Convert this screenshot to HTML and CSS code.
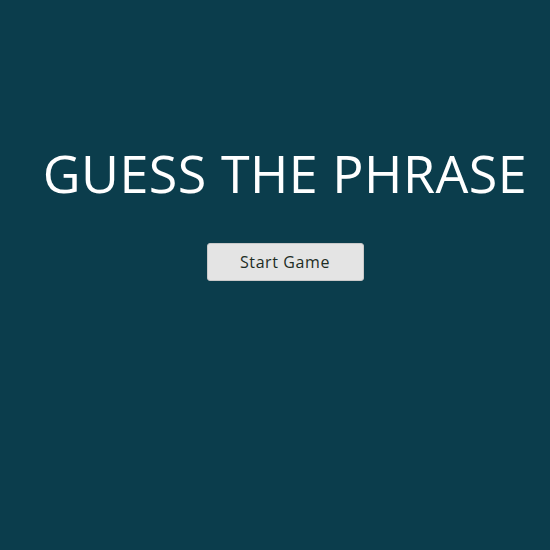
FILE: index.html
```html
<!DOCTYPE html>
<html>
<head>
<meta charset="utf-8">
<link rel="stylesheet" href="styles.css">
</head>
<body>
<div class="overlay">
  <h1 class="title">GUESS THE PHRASE</h1>
  <button class="btn-start">Start Game</button>
</div>
</body>
</html>
```
FILE: styles.css
```css
html, body {
  margin: 0;
  padding: 0;
  height: 100%;
  background: #0b3d4c;
}
.overlay {
  display: flex;
  flex-direction: column;
  align-items: center;
  padding: 138px 0 0 20px;
  font-family: "Open Sans", "Liberation Sans", sans-serif;
}
.title {
  margin: 0;
  color: #ffffff;
  font-weight: 400;
  font-size: 52px;
  line-height: 70px;
  letter-spacing: 0.5px;
  white-space: nowrap;
}
.btn-start {
  margin-top: 35px;
  width: 157px;
  height: 38px;
  background: #e4e4e4;
  border: 1px solid #c9c9c9;
  border-radius: 3px;
  color: #1d2d24;
  font-family: "Open Sans", "Liberation Sans", sans-serif;
  font-size: 16px;
  letter-spacing: 0.6px;
  padding: 0;
}
```
